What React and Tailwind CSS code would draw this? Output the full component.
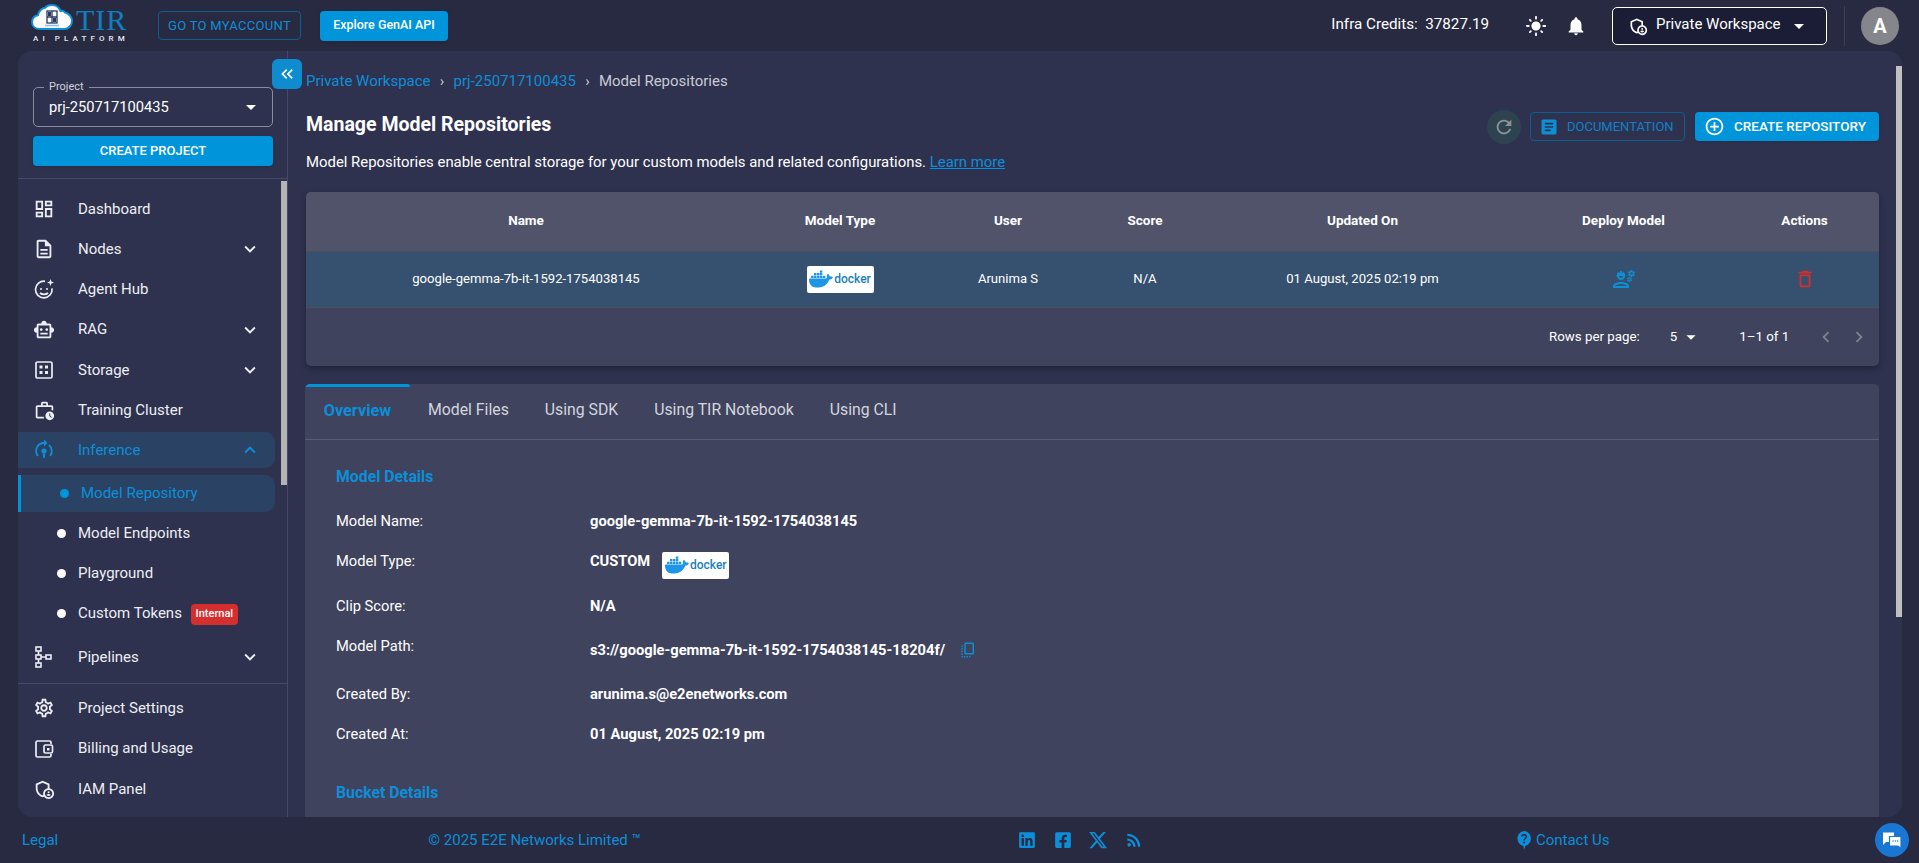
import {
  MdOutlineDashboard, MdOutlineDescription, MdOutlineSmartToy, MdOutlineSettings, MdOutlineAdminPanelSettings,
  MdExpandMore, MdExpandLess, MdKeyboardDoubleArrowLeft, MdArrowDropDown, MdLightMode, MdNotifications,
  MdRefresh, MdArticle, MdAddCircleOutline, MdOutlineEngineering, MdDeleteOutline, MdOutlineCopyAll,
  MdRssFeed, MdChevronLeft, MdChevronRight, MdOutlineWorkHistory,
} from 'react-icons/md'
import { FaLinkedin, FaFacebookSquare } from 'react-icons/fa'
import { FaXTwitter } from 'react-icons/fa6'
import { SiDocker } from 'react-icons/si'

function StorageIcon() {
  return (
    <svg width="20" height="20" viewBox="0 0 20 20" fill="none" stroke="currentColor" strokeWidth="1.7">
      <rect x="2" y="2" width="16" height="16" rx="1.5" />
      <rect x="5.5" y="5.5" width="3" height="3" fill="currentColor" stroke="none" />
      <rect x="11" y="5.5" width="3" height="3" fill="currentColor" stroke="none" />
      <rect x="5.5" y="11" width="3" height="3" fill="currentColor" stroke="none" />
      <rect x="11" y="11" width="3" height="3" fill="currentColor" stroke="none" />
    </svg>
  )
}

function AgentIcon() {
  return (
    <svg width="22" height="22" viewBox="0 0 22 22" fill="none" stroke="currentColor" strokeWidth="1.7">
      <path d="M12 3.3a8.3 8.3 0 1 0 7 7" />
      <circle cx="8" cy="11" r="1" fill="currentColor" stroke="none" />
      <circle cx="14" cy="11" r="1" fill="currentColor" stroke="none" />
      <path d="M7 15c2 1.8 6 1.8 8 0" />
      <path d="M17.5 1l.9 2.6 2.6.9-2.6.9-.9 2.6-.9-2.6-2.6-.9 2.6-.9z" fill="currentColor" stroke="none" />
    </svg>
  )
}

function InferenceIcon() {
  return (
    <svg width="20" height="22" viewBox="0 0 20 22" fill="none" stroke="currentColor" strokeWidth="1.8">
      <path d="M4 17a8 8 0 0 1 5-13h3" />
      <path d="M16 17a8 8 0 0 0-1-11" />
      <path d="M10 0.5l3.5 3.5-3.5 3.5z" fill="currentColor" stroke="none" />
      <circle cx="10" cy="12" r="2.6" fill="currentColor" stroke="none" />
      <path d="M8.7 15h2.6l-.5 4h-1.6z" fill="currentColor" stroke="none" />
    </svg>
  )
}

function PipelineIcon() {
  return (
    <svg width="20" height="22" viewBox="0 0 20 22" fill="none" stroke="currentColor" strokeWidth="1.6">
      <rect x="2" y="1" width="5" height="4" />
      <rect x="2" y="9" width="5" height="4" />
      <rect x="2" y="17" width="5" height="4" />
      <rect x="12" y="9" width="5" height="4" />
      <path d="M4.500 5v4M4.500 13v4M7 11h5" />
    </svg>
  )
}

function WalletIcon() {
  return (
    <svg width="20" height="20" viewBox="0 0 20 20" fill="none" stroke="currentColor" strokeWidth="1.7">
      <path d="M17 5V3.500A1.500 1.500 0 0 0 15.500 2h-12A1.500 1.500 0 0 0 2 3.500v13A1.500 1.500 0 0 0 3.500 18h12a1.500 1.500 0 0 0 1.500-1.500V15" />
      <rect x="10" y="6" width="8.500" height="8" rx="1.500" />
      <rect x="13" y="9" width="2.500" height="2.500" fill="currentColor" stroke="none" />
    </svg>
  )
}

function HelpBubble() {
  return (
    <svg width="14" height="19" viewBox="0 0 14 19">
      <path d="M7 0a7 7.500 0 0 1 1.500 14.800L7 19l-.6-4.100A7 7.500 0 0 1 7 0z" fill="currentColor" />
      <path d="M4.700 5.500C4.900 3 9.300 3 9.300 5.700c0 1.800-2.300 1.900-2.300 3.800" fill="none" stroke="#282a42" strokeWidth="1.500" />
      <circle cx="7" cy="11.600" r="1" fill="#282a42" />
    </svg>
  )
}

function ChatIcon() {
  return (
    <svg width="20" height="20" viewBox="0 0 20 20">
      <path d="M1 2.500h11v9.500H4l-3 3z" fill="#fff" />
      <path d="M7.500 6.500H19v12l-3-2.500H7.500z" fill="#fff" stroke="#1976d2" strokeWidth="1.200" />
      <circle cx="11" cy="11" r=".7" fill="#1976d2" />
      <circle cx="13.300" cy="11" r=".7" fill="#1976d2" />
      <circle cx="15.600" cy="11" r=".7" fill="#1976d2" />
    </svg>
  )
}

function Logo() {
  return (
    <div className="ml-[31px] w-[100px] h-[51px] flex flex-col shrink-0">
      <div className="flex items-start h-[33px] pt-[4px]">
        <svg width="42" height="27" viewBox="0 0 42 27">
          <path d="M9 25C4 25 1 22 1 18c0-4 3-6.500 6-6.800C8 6.500 11.500 4 14 3.800 16 1.500 19 1 21 1c4 0 7 2.500 8.500 6 1.200-.5 3.500-.3 4.500 1.500 4 .8 7 4.500 7 8.500 0 4.500-3.500 8-8 8z" fill="#fff" stroke="#0e90d8" strokeWidth="2" />
          <rect x="16" y="7" width="10" height="12" fill="none" stroke="#2b3a63" strokeWidth="1.300" />
          <path d="M21 7v12M16 13h10" stroke="#2b3a63" strokeWidth="1.300" />
          <rect x="17" y="8" width="3" height="4" fill="#2b3a63" />
          <rect x="22" y="14" width="3" height="4" fill="#2b3a63" />
          <path d="M14 21.500h14" stroke="#7fc3ea" strokeWidth="1.500" />
        </svg>
        <span className="ml-[3px] mt-[3px] text-[30px] leading-[26px] tracking-[1px] text-[#0f7fc0] font-['Liberation_Serif',serif]">TIR</span>
      </div>
      <span className="mt-[1px] ml-[2px] text-[8px] leading-[10px] tracking-[4.1px] text-[#e6e8f0] whitespace-nowrap font-medium">AI PLATFORM</span>
    </div>
  )
}

function Header() {
  return (
    <header className="h-[51px] flex items-center shrink-0">
      <Logo />
      <button className="ml-[27px] w-[143px] h-[29px] rounded border border-[#0d5f8f] text-[#0d8fd6] text-[13px] leading-none tracking-[0.3px]">GO TO MYACCOUNT</button>
      <button className="ml-[19px] w-[128px] h-[30px] rounded bg-[#0095da] text-white text-[12.500px] font-medium shadow">Explore GenAI API</button>
      <div className="ml-auto flex items-center pr-[20px]">
        <span className="text-[15.200px] text-white mb-[3px] whitespace-pre">Infra Credits:  37827.19</span>
        <MdLightMode className="ml-[36px] text-white" size={22} />
        <MdNotifications className="ml-[18px] text-white" size={22} />
        <div className="ml-[25px] w-[215px] h-[38px] rounded-[5px] border border-white bg-[#1b1d36] flex items-center pl-[15px] text-white">
          <MdOutlineAdminPanelSettings size={20} />
          <span className="ml-[8px] text-[15px] mb-[2px]">Private Workspace</span>
          <MdArrowDropDown className="ml-[6px]" size={24} />
        </div>
        <div className="ml-[17px] w-px h-[40px] bg-[#3b3e5a]" />
        <div className="ml-[16px] w-[38px] h-[38px] rounded-full bg-[#85858c] flex items-center justify-center text-white text-[20px] font-bold">A</div>
      </div>
    </header>
  )
}

function NavItem({ icon, label, arrow, active }) {
  return (
    <div className={`h-[40.2px] w-[270px] shrink-0 flex items-center pl-[15px] pr-[27px] ${active ? 'text-[#0c8fd8]' : 'text-[#eceef4]'}`}>
      <span className="w-[22px] flex justify-center shrink-0">{icon}</span>
      <span className="ml-[23px] text-[15px]">{label}</span>
      {arrow === 'down' && <MdExpandMore className="ml-auto" size={22} />}
      {arrow === 'up' && <MdExpandLess className="ml-auto" size={22} />}
    </div>
  )
}

function SubItem({ label, children }) {
  return (
    <div className="h-10 flex items-center pl-[39px] text-[#eceef4]">
      <span className="w-[9px] h-[9px] rounded-full bg-white shrink-0" />
      <span className="ml-[12px] text-[15px]">{label}</span>
      {children}
    </div>
  )
}

function Sidebar() {
  return (
    <aside className="w-[270px] shrink-0 border-r border-[#47496a] relative">
      <div className="pt-[36px] px-[15px]">
        <div className="relative h-[40px] w-[240px] rounded-[5px] border border-[#8a8ca0] flex items-center pl-[15px] pr-[9px] text-white">
          <span className="absolute -top-[9px] left-[10px] px-[5px] bg-[#2f324f] text-[11px] text-[#cfd1da]">Project</span>
          <span className="text-[14.700px]">prj-250717100435</span>
          <MdArrowDropDown className="ml-auto" size={24} />
        </div>
        <button className="mt-[9px] w-[240px] h-[30px] rounded bg-[#0095da] text-white text-[13px] font-medium shadow">CREATE PROJECT</button>
      </div>
      <div className="mt-[12px] border-t border-[#47496a]" />
      <nav className="pt-[10px]">
        <NavItem icon={<MdOutlineDashboard size={22} />} label="Dashboard" />
        <NavItem icon={<MdOutlineDescription size={22} />} label="Nodes" arrow="down" />
        <NavItem icon={<AgentIcon />} label="Agent Hub" />
        <NavItem icon={<MdOutlineSmartToy size={22} />} label="RAG" arrow="down" />
        <NavItem icon={<StorageIcon />} label="Storage" arrow="down" />
        <NavItem icon={<MdOutlineWorkHistory size={21} />} label="Training Cluster" />
        <div className="h-[36px] my-[2px] w-[257px] rounded-r-[10px] bg-[#2a4364] flex items-center">
          <NavItem icon={<InferenceIcon />} label="Inference" arrow="up" active />
        </div>
        <div className="mt-[7px] h-[37px] w-[257px] rounded-r-[10px] bg-[#2a4364] border-l-[3px] border-[#0095da] flex items-center pl-[39px] text-[#0c8fd8]">
          <span className="w-[9px] h-[9px] rounded-full bg-[#0095da] shrink-0" />
          <span className="ml-[12px] text-[15px]">Model Repository</span>
        </div>
        <div className="mt-px" />
        <SubItem label="Model Endpoints" />
        <SubItem label="Playground" />
        <SubItem label="Custom Tokens">
          <span className="ml-[9px] mt-[3px] w-[47px] h-[21px] rounded bg-[#d32f2f] text-white text-[11px] font-medium flex items-center justify-center">Internal</span>
        </SubItem>
        <div className="mt-[4px]"><NavItem icon={<PipelineIcon />} label="Pipelines" arrow="down" /></div>
      </nav>
      <div className="mt-[6px] border-t border-[#47496a]" />
      <div className="pt-[4px]">
        <NavItem icon={<MdOutlineSettings size={22} />} label="Project Settings" />
        <NavItem icon={<WalletIcon />} label="Billing and Usage" />
        <NavItem icon={<MdOutlineAdminPanelSettings size={22} />} label="IAM Panel" />
      </div>
      <div className="absolute top-[130px] right-0 w-[6px] h-[304px] bg-[#b4b4b4]" />
      <button className="absolute top-[8px] -right-[15px] w-[30px] h-[30px] rounded-md bg-[#0e8ccf] text-white flex items-center justify-center z-10">
        <MdKeyboardDoubleArrowLeft size={20} />
      </button>
    </aside>
  )
}

function DockerBadge({ className }) {
  return (
    <span className={`h-[27px] w-[67px] rounded-[2px] bg-white flex items-center justify-center gap-[1px] ${className}`}>
      <SiDocker className="text-[#1d96e8]" size={24} />
      <span className="text-[#1b7fb8] text-[12px] font-medium leading-none">docker</span>
    </span>
  )
}

const columns = [
  { label: 'Name', cls: 'w-[440px]' },
  { label: 'Model Type', cls: 'w-[188px]' },
  { label: 'User', cls: 'w-[148px]' },
  { label: 'Score', cls: 'w-[126px]' },
  { label: 'Updated On', cls: 'w-[309px]' },
  { label: 'Deploy Model', cls: 'w-[213px]' },
  { label: 'Actions', cls: 'w-[149px]' },
]

function RepoTable() {
  return (
    <div className="mt-[20px] w-[1573px] rounded-[5px] bg-[#3f435e] shadow-[0_3px_6px_rgba(0,0,0,0.3)] overflow-hidden">
      <table className="w-full table-fixed text-white text-[13.100px]">
        <thead>
          <tr className="h-[59px] bg-[#51536b]">
            {columns.map((c) => (
              <th key={c.label} className={`${c.cls} font-bold text-[13.500px] pb-[3px]`}>{c.label}</th>
            ))}
          </tr>
        </thead>
        <tbody>
          <tr className="h-[56px] bg-[#36516f] border-y border-[#4d5058] text-center">
            <td>google-gemma-7b-it-1592-1754038145</td>
            <td><DockerBadge className="mx-auto" /></td>
            <td>Arunima S</td>
            <td>N/A</td>
            <td>01 August, 2025 02:19 pm</td>
            <td><MdOutlineEngineering className="mx-auto text-[#0d8fd6]" size={24} /></td>
            <td><MdDeleteOutline className="mx-auto text-[#d32f2f]" size={22} /></td>
          </tr>
        </tbody>
      </table>
      <div className="h-[58px] flex items-center text-white text-[13.300px]">
        <span className="ml-[1243px]">Rows per page:</span>
        <span className="ml-[30px]">5</span>
        <MdArrowDropDown className="ml-[3px]" size={22} />
        <span className="ml-[37px]">1–1 of 1</span>
        <MdChevronLeft className="ml-[26px] text-[#80828f]" size={22} />
        <MdChevronRight className="ml-[11px] text-[#80828f]" size={22} />
      </div>
    </div>
  )
}

function Detail({ label, className = '', valueClass = '', children }) {
  return (
    <div className={`h-10 flex items-center text-[14.700px] text-white ${className}`}>
      <span className="w-[254px] shrink-0">{label}</span>
      <div className={`flex items-center font-bold ${valueClass}`}>{children}</div>
    </div>
  )
}

const tabs = ['Model Files', 'Using SDK', 'Using TIR Notebook', 'Using CLI']

function DetailsCard() {
  return (
    <div className="relative mt-[18px] w-[1574px] -ml-px flex-1 rounded-t-[5px] bg-[#3f435e] overflow-hidden">
      <div className="h-[56px] border-b border-[#5a5c75] flex">
        <div className="relative w-[105px] flex items-center justify-center text-[16.300px] font-bold text-[#0c8fd8] pt-[1px]">
          <span className="absolute top-0 inset-x-0 h-[3px] rounded-t bg-[#0095da]" />
          Overview
        </div>
        {tabs.map((t) => (
          <div key={t} className="px-[18px] flex items-center text-[15.800px] text-[#d3d5de] pb-[3px]">{t}</div>
        ))}
      </div>
      <div className="pl-[31px]">
        <h3 className="mt-[27px] h-5 leading-5 text-[15.800px] font-bold text-[#0c8fd8]">Model Details</h3>
        <Detail label="Model Name:" className="mt-[15px]">google-gemma-7b-it-1592-1754038145</Detail>
        <Detail label="Model Type:">
          CUSTOM
          <DockerBadge className="ml-[12px] mt-[7px]" />
        </Detail>
        <Detail label="Clip Score:" className="mt-[5px]">N/A</Detail>
        <Detail label="Model Path:" valueClass="mt-[8px]">
          s3://google-gemma-7b-it-1592-1754038145-18204f/
          <MdOutlineCopyAll className="ml-[14px] text-[#0d8fd6]" size={18} />
        </Detail>
        <Detail label="Created By:" className="mt-[8px]">arunima.s@e2enetworks.com</Detail>
        <Detail label="Created At:">01 August, 2025 02:19 pm</Detail>
        <h3 className="mt-[28px] h-5 leading-5 text-[15.800px] font-bold text-[#0c8fd8]">Bucket Details</h3>
      </div>
    </div>
  )
}

function Main() {
  return (
    <main className="relative flex-1 min-w-0 flex flex-col pl-[18px] pt-[18px] overflow-hidden">
      <div className="h-6 flex items-center text-[15px] whitespace-nowrap">
        <span className="text-[#0c8fd8]">Private Workspace</span>
        <span className="w-[23px] text-center text-[#c8cad4] text-[15px]">›</span>
        <span className="text-[#0c8fd8]">prj-250717100435</span>
        <span className="w-[23px] text-center text-[#c8cad4] text-[15px]">›</span>
        <span className="text-[#c8cad4]">Model Repositories</span>
      </div>
      <div className="mt-[19px] h-[29px] w-[1573px] flex items-center">
        <h1 className="text-white text-[19.500px] font-bold mb-[4px]">Manage Model Repositories</h1>
        <span className="ml-auto w-[34px] h-[34px] rounded-full bg-[#2d4450] flex items-center justify-center text-[#8f9396]">
          <MdRefresh size={22} />
        </span>
        <button className="ml-[9px] w-[155px] h-[29px] rounded border border-[#0d5f8f] flex items-center pl-[8px] text-[#1080c8] text-[13px]">
          <MdArticle className="text-[#0d8fd6]" size={20} />
          <span className="ml-[8px]">DOCUMENTATION</span>
        </button>
        <button className="ml-[10px] w-[184px] h-[29px] rounded bg-[#0095da] flex items-center pl-[9px] text-white text-[13.500px] font-medium shadow">
          <MdAddCircleOutline size={21} />
          <span className="ml-[9px]">CREATE REPOSITORY</span>
        </button>
      </div>
      <p className="mt-[11px] h-5 leading-5 text-white text-[14.900px]">
        Model Repositories enable central storage for your custom models and related configurations. <span className="text-[#0c8fd8] underline">Learn more</span>
      </p>
      <RepoTable />
      <DetailsCard />
      <div className="absolute top-[15px] right-0 w-[6px] h-[551px] bg-[#c0c0c0]" />
    </main>
  )
}

function Footer() {
  return (
    <footer className="h-[46px] shrink-0 flex items-center text-[#0c8fd8] text-[15px] relative">
      <span className="ml-[22px]">Legal</span>
      <span className="ml-[370px]">© 2025 E2E Networks Limited ™</span>
      <FaLinkedin className="ml-[377px]" size={18} />
      <FaFacebookSquare className="ml-[18px]" size={18} />
      <FaXTwitter className="ml-[16px]" size={20} />
      <MdRssFeed className="ml-[16px]" size={20} />
      <span className="ml-[373px]"><HelpBubble /></span>
      <span className="ml-[5px]">Contact Us</span>
      <button className="absolute right-[10px] top-[6px] w-[34px] h-[34px] rounded-full bg-[#1976d2] flex items-center justify-center">
        <ChatIcon />
      </button>
    </footer>
  )
}

export default function App() {
  return (
    <div className="h-screen overflow-hidden bg-[#282a42] flex flex-col font-['Roboto',sans-serif]">
      <Header />
      <div className="flex-1 min-h-0 flex ml-[18px] mr-[17px] rounded-[14px] bg-[#2f324f]">
        <Sidebar />
        <Main />
      </div>
      <Footer />
    </div>
  )
}
